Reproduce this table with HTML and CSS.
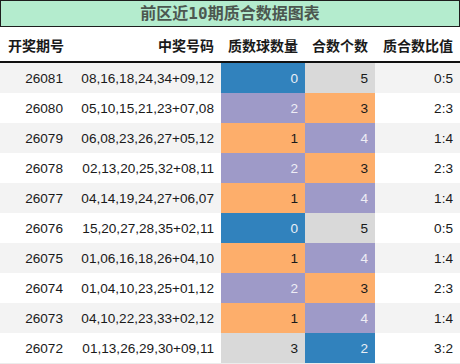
FILE: index.html
```html
<!DOCTYPE html>
<html>
<head>
<meta charset="utf-8">
<link rel="stylesheet" href="styles.css">
</head>
<body>
<div class="wrap">
  <div class="title">前区近10期质合数据图表</div>
  <div class="row head">
    <div class="c left">开奖期号</div>
    <div class="c">中奖号码</div>
    <div class="c">质数球数量</div>
    <div class="c">合数个数</div>
    <div class="c">质合数比值</div>
  </div>
  <div class="row odd"><div class="c">26081</div><div class="c">08,16,18,24,34+09,12</div><div class="c blue">0</div><div class="c grey">5</div><div class="c">0:5</div></div>
  <div class="row"><div class="c">26080</div><div class="c">05,10,15,21,23+07,08</div><div class="c purple">2</div><div class="c orange">3</div><div class="c">2:3</div></div>
  <div class="row odd"><div class="c">26079</div><div class="c">06,08,23,26,27+05,12</div><div class="c orange">1</div><div class="c purple">4</div><div class="c">1:4</div></div>
  <div class="row"><div class="c">26078</div><div class="c">02,13,20,25,32+08,11</div><div class="c purple">2</div><div class="c orange">3</div><div class="c">2:3</div></div>
  <div class="row odd"><div class="c">26077</div><div class="c">04,14,19,24,27+06,07</div><div class="c orange">1</div><div class="c purple">4</div><div class="c">1:4</div></div>
  <div class="row"><div class="c">26076</div><div class="c">15,20,27,28,35+02,11</div><div class="c blue">0</div><div class="c grey">5</div><div class="c">0:5</div></div>
  <div class="row odd"><div class="c">26075</div><div class="c">01,06,16,18,26+04,10</div><div class="c orange">1</div><div class="c purple">4</div><div class="c">1:4</div></div>
  <div class="row"><div class="c">26074</div><div class="c">01,04,10,23,25+01,12</div><div class="c purple">2</div><div class="c orange">3</div><div class="c">2:3</div></div>
  <div class="row odd"><div class="c">26073</div><div class="c">04,10,22,23,33+02,12</div><div class="c orange">1</div><div class="c purple">4</div><div class="c">1:4</div></div>
  <div class="row"><div class="c">26072</div><div class="c">01,13,26,29,30+09,11</div><div class="c grey">3</div><div class="c blue">2</div><div class="c">3:2</div></div>
</div>
</body>
</html>
```
FILE: styles.css
```css
html, body {
  margin: 0;
  padding: 0;
  background: #ffffff;
}
.wrap {
  width: 460px;
  height: 364px;
  overflow: hidden;
  font-family: "Liberation Sans", Arial, "Noto Sans CJK SC", sans-serif;
  border-bottom: 1px solid #ececec;
  box-sizing: border-box;
}
.title {
  height: 27px;
  box-sizing: border-box;
  border: 1px solid #1e1e1e;
  background: #b4ecce;
  color: #4c5750;
  font-family: "DejaVu Sans Mono", "Noto Sans CJK SC", monospace;
  font-weight: bold;
  font-size: 16px;
  line-height: 25px;
  text-align: center;
}
.row {
  display: grid;
  grid-template-columns: 70px 151px 84px 70px 85px;
  height: 30px;
}
.row.odd {
  background: #f3f3f3;
}
.head {
  height: 36px;
  box-sizing: border-box;
  border-bottom: 2px solid #111;
  background: #fff;
}
.head .c {
  font-family: "Noto Sans CJK SC", sans-serif;
  font-weight: bold;
  font-size: 14px;
  color: #1a1a1a;
  padding-top: 1px;
}
.c {
  display: flex;
  align-items: center;
  justify-content: flex-end;
  padding: 0 7px 0 8px;
  font-size: 13.6px;
  color: #1a1a1a;
  white-space: nowrap;
}
.c.left {
  justify-content: flex-start;
}
.blue {
  background: #3182bd;
  color: #e8eef5;
}
.purple {
  background: #9e9ac8;
  color: #eeedf5;
}
.orange {
  background: #fdae6b;
  color: #1a1a1a;
}
.grey {
  background: #d9d9d9;
  color: #1a1a1a;
}
```
